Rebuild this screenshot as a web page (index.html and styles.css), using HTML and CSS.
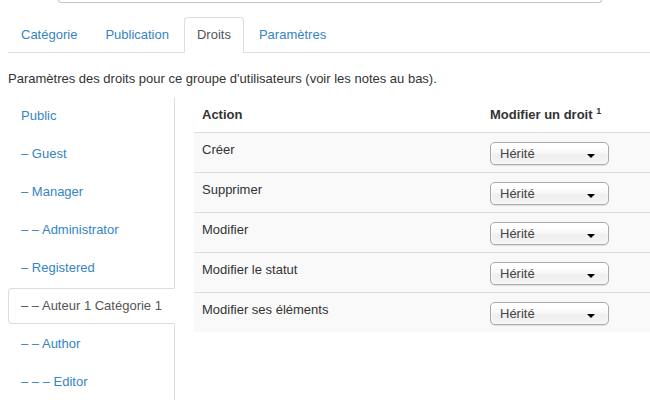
FILE: index.html
```html
<!DOCTYPE html>
<html lang="fr">
<head>
<meta charset="utf-8">
<title>Droits</title>
<link rel="stylesheet" href="styles.css">
</head>
<body>
<div class="top-input"></div>
<ul class="tabs">
  <li><a href="#">Catégorie</a></li>
  <li><a href="#">Publication</a></li>
  <li class="active"><a href="#">Droits</a></li>
  <li><a href="#">Paramètres</a></li>
</ul>
<p class="desc">Paramètres des droits pour ce groupe d'utilisateurs (voir les notes au bas).</p>
<div class="perms">
  <ul class="groups">
    <li><a href="#">Public</a></li>
    <li><a href="#">– Guest</a></li>
    <li><a href="#">– Manager</a></li>
    <li><a href="#">– – Administrator</a></li>
    <li><a href="#">– Registered</a></li>
    <li class="active"><a href="#">– – Auteur 1 Catégorie 1</a></li>
    <li><a href="#">– – Author</a></li>
    <li><a href="#">– – – Editor</a></li>
  </ul>
  <table class="rights">
    <thead>
      <tr><th class="c-action">Action</th><th>Modifier un droit <sup>1</sup></th></tr>
    </thead>
    <tbody>
      <tr><td>Créer</td><td><span class="sel">Hérité<b class="caret"></b></span></td></tr>
      <tr><td>Supprimer</td><td><span class="sel">Hérité<b class="caret"></b></span></td></tr>
      <tr><td>Modifier</td><td><span class="sel">Hérité<b class="caret"></b></span></td></tr>
      <tr><td>Modifier le statut</td><td><span class="sel">Hérité<b class="caret"></b></span></td></tr>
      <tr><td>Modifier ses éléments</td><td><span class="sel">Hérité<b class="caret"></b></span></td></tr>
    </tbody>
  </table>
</div>
</body>
</html>
```
FILE: styles.css
```css
html, body {
  margin: 0;
  padding: 0;
  background: #fff;
}
body {
  font-family: "Liberation Sans", Arial, sans-serif;
  font-size: 13px;
  line-height: 18px;
  color: #333;
  overflow: hidden;
}
a {
  color: #3584c4;
  text-decoration: none;
}
.top-input {
  margin-left: 58px;
  width: 542px;
  height: 2px;
  border: 1px solid #c8c8c8;
  border-top: none;
  border-radius: 0 0 4px 4px;
  box-sizing: content-box;
}
.tabs {
  list-style: none;
  margin: 14px 0 17px 8px;
  padding: 0;
  display: flex;
  border-bottom: 1px solid #ddd;
}
.tabs li {
  margin-bottom: -1px;
  margin-right: 2px;
}
.tabs a {
  display: block;
  padding: 8px 12px;
  line-height: 18px;
  border: 1px solid transparent;
  border-radius: 4px 4px 0 0;
}
.tabs .active a {
  color: #555;
  background: #fff;
  border-color: #ddd #ddd transparent;
}
.desc {
  margin: 0 0 10px 8px;
}
.perms {
  display: flex;
  align-items: flex-start;
  padding-left: 8px;
}
.groups {
  list-style: none;
  margin: 0 19px 0 0;
  padding: 0 0 10px;
  width: 167px;
  flex: none;
  box-sizing: border-box;
  border-right: 1px solid #ddd;
  display: flex;
  flex-direction: column;
  gap: 2px;
}
.groups a {
  display: block;
  padding: 8px 12px;
  line-height: 18px;
  border: 1px solid transparent;
  border-radius: 4px 0 0 4px;
  margin-right: -1px;
  white-space: nowrap;
}
.groups .active a {
  color: #555;
  background: #fff;
  border-color: #ddd transparent #ddd #ddd;
}
.rights {
  flex: 1;
  border-collapse: collapse;
  border-spacing: 0;
}
.rights th, .rights td {
  text-align: left;
  padding: 8px;
  line-height: 18px;
  vertical-align: top;
}
.rights th {
  font-weight: bold;
}
.rights th sup {
  font-size: 9px;
  line-height: 0;
  vertical-align: 5px;
}
.rights .c-action {
  width: 272px;
}
.rights td {
  border-top: 1px solid #ddd;
  background: #f9f9f9;
}
.rights td:last-child {
  padding-top: 9px;
  padding-bottom: 7px;
}
.sel {
  display: block;
  position: relative;
  width: 108px;
  height: 21px;
  line-height: 21px;
  padding-left: 9px;
  border: 1px solid #aaa;
  border-radius: 5px;
  background: linear-gradient(#ffffff 20%, #f6f6f6 50%, #eeeeee 52%, #f4f4f4);
  box-shadow: inset 0 0 3px #fff, 0 1px 1px rgba(0,0,0,0.1);
  color: #444;
}
.caret {
  position: absolute;
  right: 13px;
  top: 11px;
  width: 0;
  height: 0;
  border-left: 4px solid transparent;
  border-right: 4px solid transparent;
  border-top: 4px solid #000;
}
```
